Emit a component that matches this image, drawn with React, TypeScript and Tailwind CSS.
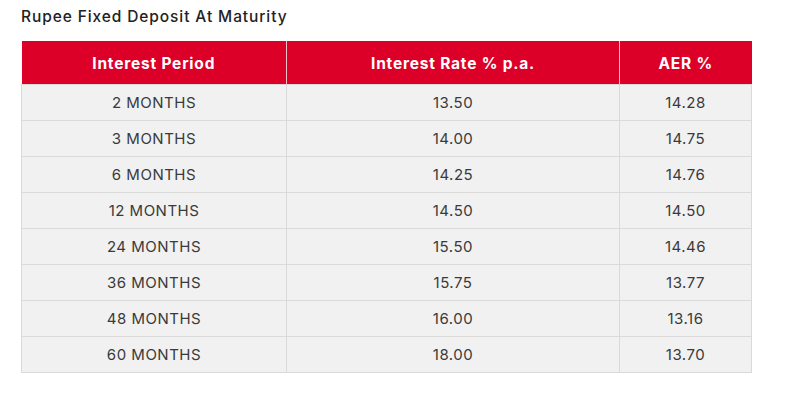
const rows = [
  ["2 MONTHS", "13.50", "14.28"],
  ["3 MONTHS", "14.00", "14.75"],
  ["6 MONTHS", "14.25", "14.76"],
  ["12 MONTHS", "14.50", "14.50"],
  ["24 MONTHS", "15.50", "14.46"],
  ["36 MONTHS", "15.75", "13.77"],
  ["48 MONTHS", "16.00", "13.16"],
  ["60 MONTHS", "18.00", "13.70"],
];

export default function App() {
  return (
    <div className="w-[792px] h-[406px] bg-white pl-[21px] pt-[6px] font-['Inter',sans-serif]">
      <h2 className="text-[15.5px] font-medium text-[#222] leading-[22px] tracking-[0.9px]">
        Rupee Fixed Deposit At Maturity
      </h2>
      <table className="mt-[13px] w-[730px] border-collapse text-[15px] table-fixed">
        <colgroup>
          <col className="w-[265px]" />
          <col className="w-[333px]" />
          <col className="w-[132px]" />
        </colgroup>
        <thead>
          <tr className="bg-[#dc0028] text-white h-[43px]">
            <th className="font-bold text-[15.5px] tracking-[0.8px] pt-[2px] border-r border-[#f3c0c8]">Interest Period</th>
            <th className="font-bold text-[15.5px] tracking-[0.8px] pt-[2px] border-r border-[#f3c0c8]">Interest Rate % p.a.</th>
            <th className="font-bold text-[15.5px] tracking-[0.8px] pt-[2px]">AER %</th>
          </tr>
        </thead>
        <tbody>
          {rows.map((r) => (
            <tr key={r[0]} className="bg-[#f1f1f1] text-[#3a3a3a] h-[36px]">
              {r.map((c, i) => (
                <td key={i} className="border border-[#dadada] text-center pt-[3px] tracking-[0.5px]">
                  {c}
                </td>
              ))}
            </tr>
          ))}
        </tbody>
      </table>
    </div>
  );
}
